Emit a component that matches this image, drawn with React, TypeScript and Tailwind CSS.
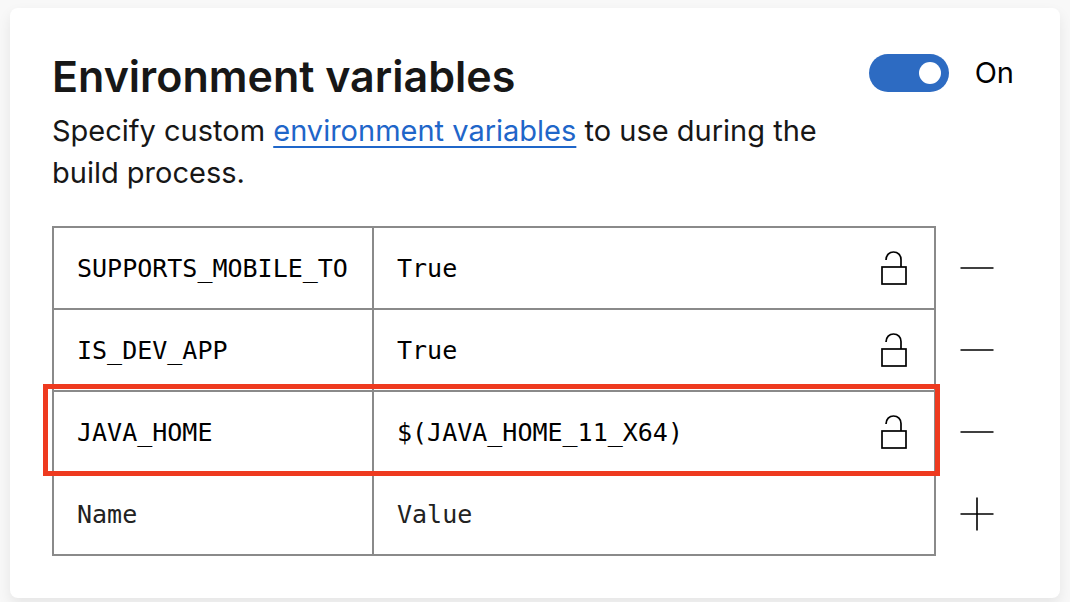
import { useState } from "react";

type Variable = { name: string; value: string; highlighted?: boolean };

const initialVariables: Variable[] = [
  { name: "SUPPORTS_MOBILE_TO", value: "True" },
  { name: "IS_DEV_APP", value: "True" },
  { name: "JAVA_HOME", value: "$(JAVA_HOME_11_X64)", highlighted: true },
];

function UnlockIcon() {
  return (
    <svg width="28" height="36" viewBox="0 0 28 36" fill="none" stroke="#000" strokeWidth="1.7" aria-hidden="true">
      <rect x="2" y="17" width="24" height="17" />
      <path d="M6 10C6 5.200 9.400 2 13.500 2C18 2 21 5.400 21 9.500V17" />
    </svg>
  );
}

function MinusIcon() {
  return (
    <svg width="34" height="34" viewBox="0 0 34 34" stroke="#000" strokeWidth="1.6" aria-hidden="true">
      <path d="M0.500 17H33.500" />
    </svg>
  );
}

function PlusIcon() {
  return (
    <svg width="34" height="34" viewBox="0 0 34 34" stroke="#000" strokeWidth="1.6" aria-hidden="true">
      <path d="M0.500 17H33.500M17 0.500V33.500" />
    </svg>
  );
}

const cell = "h-[82px] border-2 border-[#8a8a8a] p-0";
const field =
  "block w-full min-w-0 bg-transparent px-[23px] pt-[2px] font-['DejaVu_Sans_Mono',monospace] text-[25px] leading-8 text-black outline-none placeholder:text-[#222] placeholder:opacity-100";

export default function App() {
  const [variables, setVariables] = useState(initialVariables);
  const [enabled, setEnabled] = useState(true);
  const [draft, setDraft] = useState({ name: "", value: "" });

  const update = (index: number, patch: Partial<Variable>) =>
    setVariables(variables.map((v, i) => (i === index ? { ...v, ...patch } : v)));

  const add = () => {
    if (!draft.name) return;
    setVariables([...variables, draft]);
    setDraft({ name: "", value: "" });
  };

  return (
    <div className="min-h-screen bg-[#f8f8f8] px-[10px] pt-2 pb-[5px] font-[Inter,sans-serif] text-[#171717]">
      <main className="rounded-lg bg-white p-[42px] shadow-[0_6px_14px_rgba(0,0,0,0.08)]">
        <header className="flex items-start justify-between">
          <div className="max-w-[800px]">
            <h1 className="text-[43px] leading-[52px] font-semibold">Environment variables</h1>
            <p className="mt-2 text-[29px] leading-[42px]">
              Specify custom{" "}
              <a href="#variables" className="text-[#1f66c9] underline decoration-2 underline-offset-[5px]">
                environment variables
              </a>{" "}
              to use during the build process.
            </p>
          </div>
          <label className="mt-1 flex items-center gap-[26px] pr-1 text-[29px] leading-9 text-black">
            <input
              type="checkbox"
              role="switch"
              checked={enabled}
              onChange={(e) => setEnabled(e.target.checked)}
              className="flex h-[38px] w-20 appearance-none items-center rounded-full bg-[#777] px-2 before:size-[22px] before:rounded-full before:bg-white checked:justify-end checked:bg-[#2d6bc2]"
            />
            {enabled ? "On" : "Off"}
          </label>
        </header>

        <table id="variables" className="mt-8 w-full table-fixed border-collapse">
          <colgroup>
            <col className="w-[320px]" />
            <col />
            <col className="w-[83px]" />
          </colgroup>
          <tbody>
            {variables.map((variable, index) => (
              <tr key={index} className="relative">
                <td className={cell}>
                  <input
                    aria-label="Name"
                    className={field}
                    value={variable.name}
                    onChange={(e) => update(index, { name: e.target.value })}
                  />
                  {variable.highlighted && (
                    <span className="pointer-events-none absolute -top-[7px] right-[78px] -bottom-[3px] -left-[10px] border-[5px] border-[#ee3a1f]" />
                  )}
                </td>
                <td className={cell}>
                  <div className="flex items-center pr-[26px]">
                    <input
                      aria-label="Value"
                      className={field}
                      value={variable.value}
                      onChange={(e) => update(index, { value: e.target.value })}
                    />
                    <button type="button" aria-label="Toggle secret" className="shrink-0">
                      <UnlockIcon />
                    </button>
                  </div>
                </td>
                <td className="p-0">
                  <button
                    type="button"
                    aria-label="Remove variable"
                    className="mx-auto block"
                    onClick={() => setVariables(variables.filter((_, i) => i !== index))}
                  >
                    <MinusIcon />
                  </button>
                </td>
              </tr>
            ))}
            <tr>
              <td className={cell}>
                <input
                  aria-label="New name"
                  placeholder="Name"
                  className={field}
                  value={draft.name}
                  onChange={(e) => setDraft({ ...draft, name: e.target.value })}
                />
              </td>
              <td className={cell}>
                <input
                  aria-label="New value"
                  placeholder="Value"
                  className={field}
                  value={draft.value}
                  onChange={(e) => setDraft({ ...draft, value: e.target.value })}
                />
              </td>
              <td className="p-0">
                <button type="button" aria-label="Add variable" className="mx-auto block" onClick={add}>
                  <PlusIcon />
                </button>
              </td>
            </tr>
          </tbody>
        </table>
      </main>
    </div>
  );
}
